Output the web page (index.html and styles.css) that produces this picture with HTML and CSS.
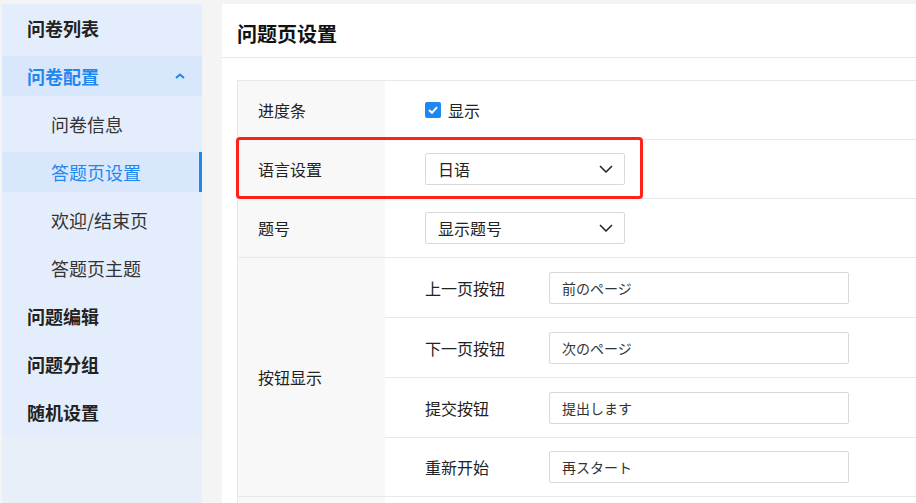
FILE: index.html
```html
<!DOCTYPE html>
<html>
<head>
    <title>问题页设置</title>
    <link rel="stylesheet" href="styles.css">
</head>
<body>
    <div class="sidebar">
        <ul class="menu">
            <li class="menu-item top">问卷列表</li>
            <li class="menu-item top open">
                问卷配置
                <svg class="caret" width="10" height="6" viewBox="0 0 10 6"><path d="M1 5 L5 1.5 L9 5" fill="none" stroke="#1e87f0" stroke-width="2"/></svg>
            </li>
            <li class="menu-item sub">问卷信息</li>
            <li class="menu-item sub active">答题页设置</li>
            <li class="menu-item sub">欢迎/结束页</li>
            <li class="menu-item sub">答题页主题</li>
            <li class="menu-item top">问题编辑</li>
            <li class="menu-item top">问题分组</li>
            <li class="menu-item top">随机设置</li>
        </ul>
    </div>

    <div class="main">
        <div class="main-header">问题页设置</div>
        <div class="content">
            <div class="form">
                <div class="row">
                    <div class="label">进度条</div>
                    <div class="value">
                        <label class="check">
                            <span class="box">
                                <svg width="10" height="8" viewBox="0 0 10 8"><path d="M1 4 L4 6.8 L9 1.2" fill="none" stroke="#fff" stroke-width="2"/></svg>
                            </span>
                            显示
                        </label>
                    </div>
                </div>
                <div class="row">
                    <div class="label">语言设置</div>
                    <div class="value">
                        <div class="select">
                            <span>日语</span>
                            <svg width="14" height="8" viewBox="0 0 14 8"><path d="M1 1 L7 7 L13 1" fill="none" stroke="#222" stroke-width="1.5"/></svg>
                        </div>
                    </div>
                    <div class="highlight"></div>
                </div>
                <div class="row">
                    <div class="label">题号</div>
                    <div class="value">
                        <div class="select">
                            <span>显示题号</span>
                            <svg width="14" height="8" viewBox="0 0 14 8"><path d="M1 1 L7 7 L13 1" fill="none" stroke="#222" stroke-width="1.5"/></svg>
                        </div>
                    </div>
                </div>
                <div class="row">
                    <div class="label">按钮显示</div>
                    <div class="inner">
                        <div class="inner-row">
                            <div class="sub-label">上一页按钮</div>
                            <input class="text-input" type="text" value="前のページ">
                        </div>
                        <div class="inner-row">
                            <div class="sub-label">下一页按钮</div>
                            <input class="text-input" type="text" value="次のページ">
                        </div>
                        <div class="inner-row">
                            <div class="sub-label">提交按钮</div>
                            <input class="text-input" type="text" value="提出します">
                        </div>
                        <div class="inner-row">
                            <div class="sub-label">重新开始</div>
                            <input class="text-input" type="text" value="再スタート">
                        </div>
                    </div>
                </div>
                <div class="row">
                    <div class="label"></div>
                    <div class="value"></div>
                </div>
            </div>
        </div>
    </div>
</body>
</html>
```

FILE: styles.css
```css
body {
    margin: 0;
    padding: 4px 0 0 2px;
    height: 503px;
    box-sizing: border-box;
    overflow: hidden;
    background-color: #f4f4f4;
    font-family: "Noto Sans CJK SC", "Noto Sans", sans-serif;
    color: #222;
    display: flex;
    gap: 20px;
}
.sidebar {
    width: 200px;
    flex-shrink: 0;
    background-color: #e9eff9;
}
.menu {
    list-style: none;
    margin: 0;
    padding: 4px 0;
    background-color: #e3edfb;
    display: flex;
    flex-direction: column;
    gap: 8px;
}
.menu-item {
    height: 40px;
    display: flex;
    align-items: center;
    font-size: 18px;
    position: relative;
}
.menu-item.top {
    padding-left: 25px;
    font-weight: bold;
    color: #222;
}
.menu-item.sub {
    padding-left: 49px;
    color: #333;
}
.menu-item.open {
    background-color: #d9e7fd;
    color: #1e87f0;
}
.menu-item.active {
    background-color: #d9e7fd;
    color: #1e87f0;
}
.menu-item.active::after {
    content: "";
    position: absolute;
    right: 0;
    top: 0;
    bottom: 0;
    width: 3px;
    background-color: #1e87f0;
}
.caret {
    position: absolute;
    left: 173px;
    top: 17px;
}
.main {
    flex: 1;
    background-color: #fff;
    overflow: hidden;
}
.main-header {
    height: 54px;
    box-sizing: border-box;
    padding: 5px 0 0 15px;
    display: flex;
    align-items: center;
    font-size: 20px;
    font-weight: bold;
    color: #111;
    border-bottom: 1px solid #e8e8e8;
}
.content {
    padding: 22px 0 0 15px;
}
.form {
    border-top: 1px solid #e8e8e8;
    border-left: 1px solid #e8e8e8;
}
.row {
    display: flex;
    border-bottom: 1px solid #e8e8e8;
    position: relative;
}
.label {
    width: 147px;
    flex-shrink: 0;
    box-sizing: border-box;
    padding-left: 20px;
    background-color: #f8f8f8;
    display: flex;
    align-items: center;
    font-size: 16px;
    color: #222;
}
.value {
    flex: 1;
    height: 58px;
    padding-left: 40px;
    display: flex;
    align-items: center;
}
.check {
    display: flex;
    align-items: center;
    gap: 7px;
    font-size: 16px;
    color: #222;
}
.box {
    width: 16px;
    height: 16px;
    border-radius: 2px;
    background-color: #1e87f0;
    display: flex;
    align-items: center;
    justify-content: center;
}
.select {
    width: 200px;
    height: 32px;
    box-sizing: border-box;
    border: 1px solid #d9d9d9;
    border-radius: 2px;
    padding: 0 11px 0 12px;
    display: flex;
    align-items: center;
    justify-content: space-between;
    font-size: 16px;
    color: #222;
}
.highlight {
    position: absolute;
    left: -2px;
    top: -3px;
    bottom: -1px;
    width: 407px;
    box-sizing: border-box;
    border: 3px solid #ff2219;
    border-radius: 4px;
}
.inner {
    flex: 1;
}
.inner-row {
    height: 59px;
    padding-left: 40px;
    display: flex;
    align-items: center;
    border-bottom: 1px solid #e8e8e8;
}
.inner-row:last-child {
    height: 58px;
    border-bottom: none;
}
.sub-label {
    width: 124px;
    font-size: 16px;
    color: #222;
}
.text-input {
    width: 300px;
    height: 32px;
    box-sizing: border-box;
    border: 1px solid #d9d9d9;
    border-radius: 2px;
    padding: 0 12px;
    font-family: "Noto Sans CJK JP", "Noto Sans CJK SC", sans-serif;
    font-size: 14px;
    color: #333;
    outline: none;
}
```
